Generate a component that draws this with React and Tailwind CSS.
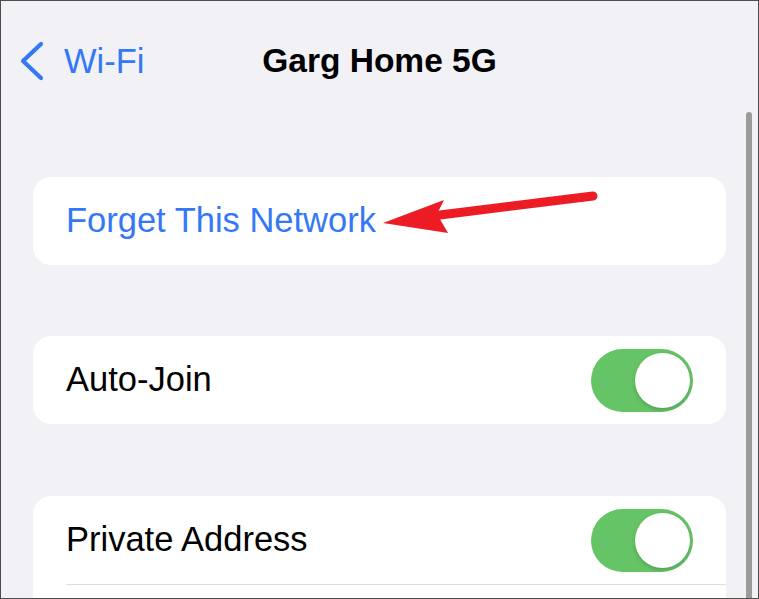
import React from "react";

function Toggle() {
  return (
    <div className="w-[102px] h-[63px] rounded-full bg-[#65c466] flex items-center justify-end pr-[3px]">
      <div className="w-[55px] h-[55px] rounded-full bg-white shadow-[0_2px_4px_rgba(0,0,0,0.18)]" />
    </div>
  );
}

export default function App() {
  return (
    <div className="relative w-[759px] h-[599px] overflow-hidden border border-[#4d4d4d] bg-[#f1f1f6] font-['Liberation_Sans',Arial,sans-serif] text-[34.5px] text-black">
      {/* nav bar */}
      <div className="grid grid-cols-[1fr_auto_1fr] items-center h-[60px] mt-[30px]">
        <div className="flex items-center pl-[19px] text-[#3478f6]">
          <svg width="26" height="40" viewBox="0 0 26 40" fill="none">
            <path d="M21 3 L3 20 L21 37" stroke="#3478f6" strokeWidth="4.2" strokeLinecap="round" strokeLinejoin="round" />
          </svg>
          <span className="ml-[18px] leading-none">Wi-Fi</span>
        </div>
        <div className="font-bold text-[33.5px] leading-none">Garg Home 5G</div>
        <div />
      </div>

      <div className="px-[32px]">
        <div className="mt-[86px] h-[88px] rounded-[18px] bg-white flex items-center pl-[33px] text-[#3478f6]">
          Forget This Network
        </div>

        <div className="mt-[71px] h-[88px] rounded-[18px] bg-white flex items-center justify-between pl-[33px] pr-[33px]">
          <span>Auto-Join</span>
          <Toggle />
        </div>

        <div className="mt-[72px] rounded-[18px] bg-white">
          <div className="h-[88px] flex items-center justify-between pl-[33px] pr-[33px]">
            <span>Private Address</span>
            <Toggle />
          </div>
          <div className="ml-[33px] h-px bg-[#dcdce1]" />
          <div className="h-[88px]" />
        </div>
      </div>

      {/* annotation arrow */}
      <svg className="absolute left-0 top-0" width="757" height="597" viewBox="1 1 757 597">
        <line x1="593" y1="196" x2="440" y2="215" stroke="#ed1c24" strokeWidth="9" strokeLinecap="round" />
        <polygon points="383,223 444,200 437,214 448,233" fill="#ed1c24" />
      </svg>

      {/* scrollbar */}
      <div className="absolute right-[6px] top-[111px] bottom-0 w-[6px] rounded-t-full bg-[#9b9b9b]" />
    </div>
  );
}
